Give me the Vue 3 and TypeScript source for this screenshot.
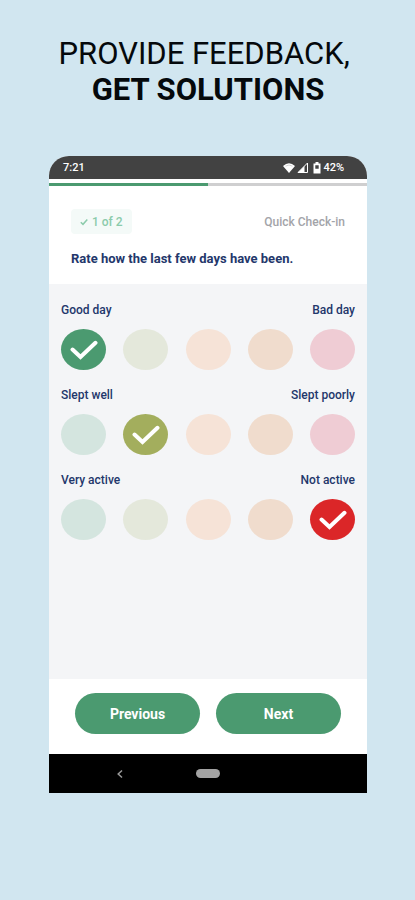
<script setup lang="ts">
import { ref } from 'vue'

interface Question {
  id: string
  low: string
  high: string
  value: number
}

const tones = ['green', 'olive', 'peach', 'sand', 'red']

const questions = ref<Question[]>([
  { id: 'day', low: 'Good day', high: 'Bad day', value: 0 },
  { id: 'sleep', low: 'Slept well', high: 'Slept poorly', value: 1 },
  { id: 'activity', low: 'Very active', high: 'Not active', value: 4 },
])

const progress = ref(50)
</script>

<template>
  <main class="page">
    <h1 class="headline">
      <span class="line">PROVIDE FEEDBACK,&nbsp;</span>
      <strong class="line">GET SOLUTIONS</strong>
    </h1>

    <section class="phone">
      <div class="status">
        <span>7:21</span>
        <span class="status-right">
          <svg width="12" height="12" viewBox="0 0 12 12" aria-hidden="true">
            <path d="M0 4Q6-1.500 12 4L6 11Z" fill="#fff" />
            <path d="M2.500 4.200Q6 1.800 9.500 4.200" fill="none" stroke="#b5b5b5" stroke-width=".6" />
          </svg>
          <svg width="12" height="12" viewBox="0 0 12 12" aria-hidden="true">
            <path d="M10.500 1V10.500H1Z" fill="none" stroke="#fff" />
            <path d="M7.500 4V10.500H1Z" fill="#fff" />
          </svg>
          <svg class="battery" width="8" height="12" viewBox="0 0 8 12" aria-hidden="true">
            <path d="M2.500 0H5.500V1.500H7.500V11.500H.5V1.500H2.500Z" fill="#fff" />
            <path d="M2.300 3.200H5.700V6.800H2.300Z" fill="#424242" />
          </svg>
          <span>42%</span>
        </span>
      </div>

      <div class="track" role="progressbar" :aria-valuenow="progress" aria-valuemin="0" aria-valuemax="100">
        <div class="bar" :style="{ width: progress + '%' }"></div>
      </div>

      <header class="intro">
        <div class="meta">
          <span class="step">
            <svg width="8" height="8" viewBox="0 0 8 8" aria-hidden="true">
              <path d="M.8 4.200L3 6.300L7.300 1.500" fill="none" stroke="currentColor" stroke-width="1.500" />
            </svg>
            1 of 2
          </span>
          <span class="topic">Quick Check-in</span>
        </div>
        <h2 class="prompt">Rate how the last few days have been.</h2>
      </header>

      <form id="checkin" class="questions" @submit.prevent>
        <div v-for="q in questions" :key="q.id" class="question" role="radiogroup" :aria-label="q.low + ' to ' + q.high">
          <div class="ends">
            <span>{{ q.low }}</span>
            <span>{{ q.high }}</span>
          </div>
          <div class="scale">
            <label v-for="(tone, i) in tones" :key="tone" class="choice" :class="tone">
              <input v-model="q.value" type="radio" :name="q.id" :value="i" :aria-label="`${i + 1} of 5`" />
              <svg v-if="q.value === i" class="tick" viewBox="0 0 28 20" aria-hidden="true">
                <path d="M2.500 9.500L10.500 17L25.500 2.800" />
              </svg>
            </label>
          </div>
        </div>
      </form>

      <footer class="actions">
        <button type="button">Previous</button>
        <button type="submit" form="checkin">Next</button>
      </footer>

      <nav class="system">
        <button type="button" class="back" aria-label="Back">
          <svg width="8" height="10" viewBox="0 0 8 10" aria-hidden="true">
            <path d="M6 1.500L2.200 5L6 8.500" fill="none" stroke="#9a9a9a" stroke-width="1.500" />
          </svg>
        </button>
        <button type="button" class="home" aria-label="Home"></button>
      </nav>
    </section>
  </main>
</template>

<style>
body {
  background: #d1e6f0;
}
</style>

<style scoped>
* {
  box-sizing: border-box;
}

.page {
  min-height: 100vh;
  padding: 36px 48px 48px 49px;
  display: flex;
  flex-direction: column;
  gap: 48px;
  background: #d1e6f0;
  font-family: Roboto, "Liberation Sans", sans-serif;
}

.headline {
  margin: 0;
  color: #05090c;
  font-size: 31px;
  line-height: 36px;
  font-weight: 400;
  text-align: center;
  white-space: nowrap;
}

.line {
  display: block;
}

strong.line {
  font-weight: 700;
}

.phone {
  display: flex;
  flex-direction: column;
  overflow: hidden;
  border-radius: 20px 20px 0 0;
  background: #fff;
  color: #23376b;
}

.status {
  display: flex;
  align-items: center;
  justify-content: space-between;
  height: 23px;
  padding: 0 23px 0 14px;
  background: #424242;
  color: #fff;
  font-size: 11px;
  font-weight: 500;
}

.status-right {
  display: flex;
  align-items: center;
  gap: 2px;
}

.battery {
  margin-left: 2px;
}

.track {
  height: 3px;
  margin-top: 4px;
  background: #cfcfd0;
}

.bar {
  height: 100%;
  background: #4b9a70;
}

.intro {
  padding: 23px 22px 17px;
}

.meta {
  display: flex;
  align-items: center;
  justify-content: space-between;
}

.step {
  display: flex;
  align-items: center;
  gap: 4px;
  height: 25px;
  padding: 0 9px;
  border-radius: 4px;
  background: #f4faf8;
  color: #8bcbab;
  font-size: 12px;
  font-weight: 500;
}

.topic {
  color: #a3a4a9;
  font-size: 12px;
  font-weight: 500;
}

.prompt {
  margin: 17px 0 0;
  font-size: 13px;
  line-height: 16px;
  font-weight: 700;
}

.questions {
  display: flex;
  flex-direction: column;
  gap: 17px;
  min-height: 395px;
  padding: 18px 12px;
  background: #f4f5f7;
}

.question {
  display: flex;
  flex-direction: column;
  gap: 11px;
}

.ends {
  display: flex;
  justify-content: space-between;
  font-size: 12px;
  line-height: 16px;
  font-weight: 500;
}

.scale {
  display: flex;
  justify-content: space-between;
}

.choice {
  display: grid;
  place-items: center;
  cursor: pointer;
}

.choice input,
.tick {
  grid-area: 1 / 1;
}

.choice input {
  appearance: none;
  width: 45px;
  height: 41px;
  margin: 0;
  border-radius: 50%;
}

.green input { background: #d4e5df; }
.olive input { background: #e4e8db; }
.peach input { background: #f6e3d7; }
.sand input { background: #f0dccd; }
.red input { background: #efccd4; }
.green input:checked { background: #4b9a70; }
.olive input:checked { background: #a3ae5d; }
.peach input:checked { background: #e9a67c; }
.sand input:checked { background: #d4935f; }
.red input:checked { background: #db2628; }

.tick {
  width: 28px;
  height: 20px;
  pointer-events: none;
}

.tick path {
  fill: none;
  stroke: #fff;
  stroke-width: 4;
  stroke-linecap: round;
}

.actions {
  display: flex;
  gap: 16px;
  padding: 14px 26px 20px;
}

.actions button {
  flex: 1;
  height: 41px;
  padding: 0;
  border: 0;
  border-radius: 21px;
  background: #4b9a70;
  color: #fff;
  font: 700 14px Roboto, "Liberation Sans", sans-serif;
}

.system {
  display: grid;
  grid-template-columns: 1fr 24px 1fr;
  column-gap: 6px;
  align-items: center;
  height: 39px;
  background: #000;
}

.system button {
  padding: 0;
  border: 0;
}

.back {
  display: flex;
  justify-self: center;
  background: none;
}

.home {
  height: 9px;
  border-radius: 5px;
  background: #a3a3a3;
}
</style>
